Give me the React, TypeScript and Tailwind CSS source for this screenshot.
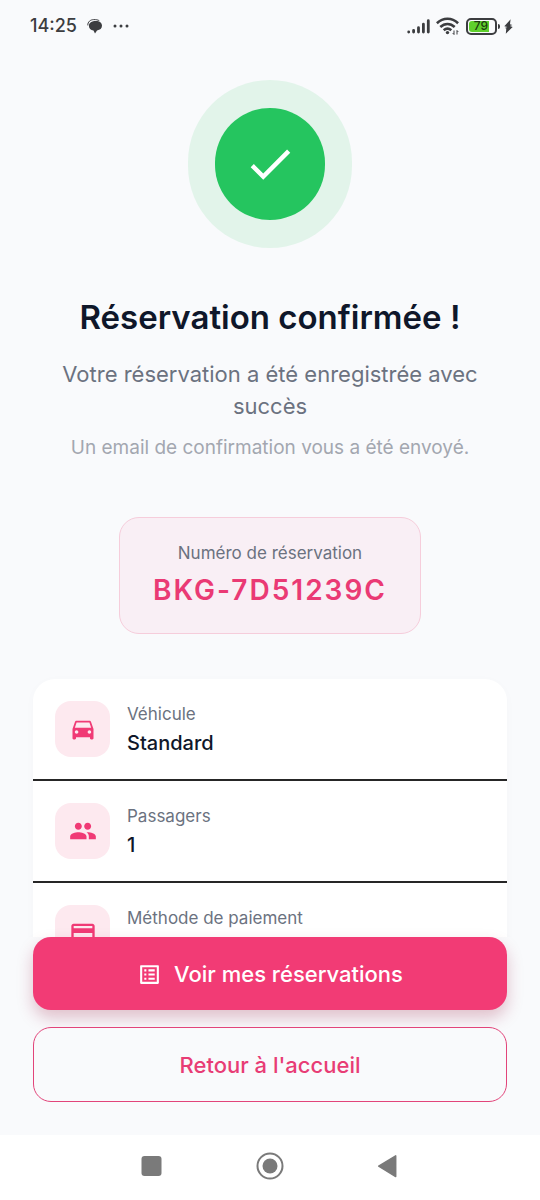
/**
 * Booking confirmation screen: success badge, booking number, trip details
 * and the two actions pinned above the system navigation bar.
 */

import type { IconType } from 'react-icons';
import {
  MdCheck,
  MdDirectionsCar,
  MdOutlineListAlt,
  MdPayment,
  MdPeople,
} from 'react-icons/md';

interface DetailItem {
  id: string;
  label: string;
  value?: string;
  icon: IconType;
}

const DETAILS: DetailItem[] = [
  { id: 'vehicle', label: 'Véhicule', value: 'Standard', icon: MdDirectionsCar },
  { id: 'passengers', label: 'Passagers', value: '1', icon: MdPeople },
  { id: 'payment', label: 'Méthode de paiement', icon: MdPayment },
];

function StatusBar(): React.JSX.Element {
  return (
    <header className="flex h-[52px] shrink-0 items-center justify-between pr-[27px] pl-[30px] text-[#3c3d40]">
      <div className="flex items-center">
        <span className="text-[18px] leading-6 font-medium">14:25</span>
        {/* Message notification */}
        <svg className="ml-[10px] h-[15px] w-[16px]" viewBox="0 0 16 15" aria-hidden>
          <path d="M.8 6.400C.6 2.800 3.400.7 6.600.6 9 .5 11 .9 12.300 1.700" fill="none" stroke="currentColor" strokeWidth="1" />
          <path d="M9 1.900c3.600 0 6 1.700 6 4.700 0 2.900-1.900 4.600-5 4.800L8 14.400 6.500 11.400C3.600 11 1.900 9.300 1.900 6.700 1.900 3.700 4.800 1.900 9 1.900z" fill="currentColor" />
        </svg>
        <svg className="ml-[10px] h-[4px] w-[16px]" viewBox="0 0 16 4" fill="currentColor" aria-hidden>
          <circle cx="2" cy="2" r="1.500" />
          <circle cx="8" cy="2" r="1.500" />
          <circle cx="14" cy="2" r="1.500" />
        </svg>
      </div>

      <div className="flex items-center">
        {/* Signal */}
        <svg className="h-[15px] w-[23px]" viewBox="0 0 23 15" stroke="currentColor" strokeWidth="2.800" strokeLinecap="round" aria-hidden>
          <path d="M1.700 13.100v-.1M6.600 13.100v-1.800M11.500 13.100V8.700M16.400 13.100V5.200M21.300 13.100V1.700" />
        </svg>
        {/* Wi-Fi */}
        <svg className="ml-[6px] h-[18px] w-[24px]" viewBox="0 0 24 18" fill="none" stroke="currentColor" strokeWidth="2.600" aria-hidden>
          <path d="M.9 6.200C7.200.3 15.800.3 22.100 6.200" />
          <path d="M4.300 10c4.300-4 10.100-4 14.400 0" />
          <path d="M7.700 13.300c2.400-2.200 5.200-2.200 7.600 0" />
          <circle cx="11.500" cy="15.600" r="1.700" fill="currentColor" stroke="none" />
          <path d="M18 13.500v4M16.700 16l1.300 1.500M21 17.500v-4M22.300 15L21 13.500" strokeWidth="1" />
        </svg>
        {/* Battery */}
        <div className="ml-[6px] flex h-[17px] w-[31px] items-center rounded-[5px] border-2 border-[#3c3d40] p-[1px]">
          <span className="flex h-[11px] w-[20px] items-center justify-center rounded-l-[3px] bg-[#5fd02c] pl-[4px] text-[12px] leading-none font-medium text-[#1d3c10]">
            79
          </span>
        </div>
        <span className="ml-[1px] h-[5px] w-[2px] rounded-r-sm bg-[#3c3d40]" />
        <svg className="ml-[4px] h-[15px] w-[9px]" viewBox="0 0 9 15" fill="currentColor" aria-hidden>
          <path d="M6.600.3L.3 7.200l3.100.8-2.600.9 1.500.6L1.800 14.700 8.700 7.900 5.900 7l2.500-.9-2.400-.8z" />
        </svg>
      </div>
    </header>
  );
}

function DetailRow({ item }: { item: DetailItem }): React.JSX.Element {
  const Icon = item.icon;

  return (
    <li className="flex gap-[17px] border-b-2 border-[#262626] p-[22px] last:border-b-0">
      <div className="flex h-14 w-[55px] items-center justify-center rounded-2xl bg-[#fde9ef] text-[#f03a75]">
        <Icon className="h-7 w-7" />
      </div>
      <div className="flex flex-col gap-[2px]">
        <p className="text-[17px] leading-[26px] text-[#6b7280]">{item.label}</p>
        {item.value && <p className="text-[20px] leading-7 font-medium text-[#0f172a]">{item.value}</p>}
      </div>
    </li>
  );
}

function SystemNav(): React.JSX.Element {
  return (
    <nav className="flex h-[65px] shrink-0 items-center justify-center gap-[93px] bg-white pb-1 text-[#7a7a7a]">
      <button type="button" aria-label="Applications récentes">
        <svg className="h-6 w-6" viewBox="0 0 24 24" fill="currentColor">
          <rect x="2.500" y="2" width="20" height="20" rx="3" />
        </svg>
      </button>
      <button type="button" aria-label="Accueil">
        <svg className="h-7 w-7" viewBox="0 0 28 28">
          <circle cx="14" cy="14" r="12.500" fill="none" stroke="currentColor" strokeWidth="2" />
          <circle cx="14" cy="14" r="7.500" fill="currentColor" />
        </svg>
      </button>
      <button type="button" aria-label="Retour">
        <svg className="h-6 w-6" viewBox="0 0 24 24" fill="currentColor" stroke="currentColor" strokeWidth="1.500" strokeLinejoin="round">
          <path d="M18.700 1.800v20.800L1.700 12.200z" />
        </svg>
      </button>
    </nav>
  );
}

export default function App(): React.JSX.Element {
  return (
    <div className="flex h-screen flex-col bg-[#f9fafc] font-['Inter',sans-serif]">
      <StatusBar />

      <main className="min-h-0 flex-1 overflow-y-auto px-[33px] pt-7 [scrollbar-width:none]">
        {/* Success badge */}
        <div className="mx-auto flex h-[168px] w-[164px] items-center justify-center rounded-full bg-[#e2f4ea]">
          <div className="flex h-28 w-[110px] items-center justify-center rounded-full bg-[#25c55f]">
            <MdCheck className="h-[54px] w-[54px] text-white" />
          </div>
        </div>

        <div className="mt-[49px] text-center">
          <h1 className="text-[33px] leading-10 font-semibold text-[#0f172a]">Réservation confirmée !</h1>
          <p className="mt-[21px] text-[22px] leading-8 text-[#6b7280]">
            Votre réservation a été enregistrée avec succès
          </p>
          <p className="mt-3 text-[19px] leading-7 text-[#a3a7b0]">Un email de confirmation vous a été envoyé.</p>
        </div>

        {/* Booking number */}
        <div className="mx-auto mt-[55px] w-fit rounded-[20px] border border-[#f6cddb] bg-[#f9eff5] px-[33px] pt-[23px] pb-[25px] text-center">
          <p className="text-[17px] leading-6 text-[#6b7280]">Numéro de réservation</p>
          <p className="mt-[7px] text-[28px] leading-9 font-semibold tracking-[2px] text-[#ea3a74]">BKG-7D51239C</p>
        </div>

        <ul className="mt-[45px] rounded-[22px] bg-white shadow-[0_2px_12px_rgba(0,0,0,0.02)]">
          {DETAILS.map((item) => (
            <DetailRow key={item.id} item={item} />
          ))}
        </ul>
      </main>

      {/* Actions */}
      <div className="flex shrink-0 flex-col gap-[17px] px-[33px] pb-[33px]">
        <button
          type="button"
          className="flex h-[73px] items-center justify-center gap-3 rounded-[18px] bg-[#f23b75] pt-[2px] text-[22px] font-medium text-white shadow-[0_8px_16px_rgba(150,20,60,0.25)]"
        >
          <MdOutlineListAlt className="h-[25px] w-[25px]" />
          Voir mes réservations
        </button>
        <button
          type="button"
          className="h-[75px] rounded-[18px] border border-[#e2447a] bg-[#f9fafc] pt-[2px] text-[22px] font-medium text-[#e83c75]"
        >
          Retour à l&apos;accueil
        </button>
      </div>

      <SystemNav />
    </div>
  );
}
